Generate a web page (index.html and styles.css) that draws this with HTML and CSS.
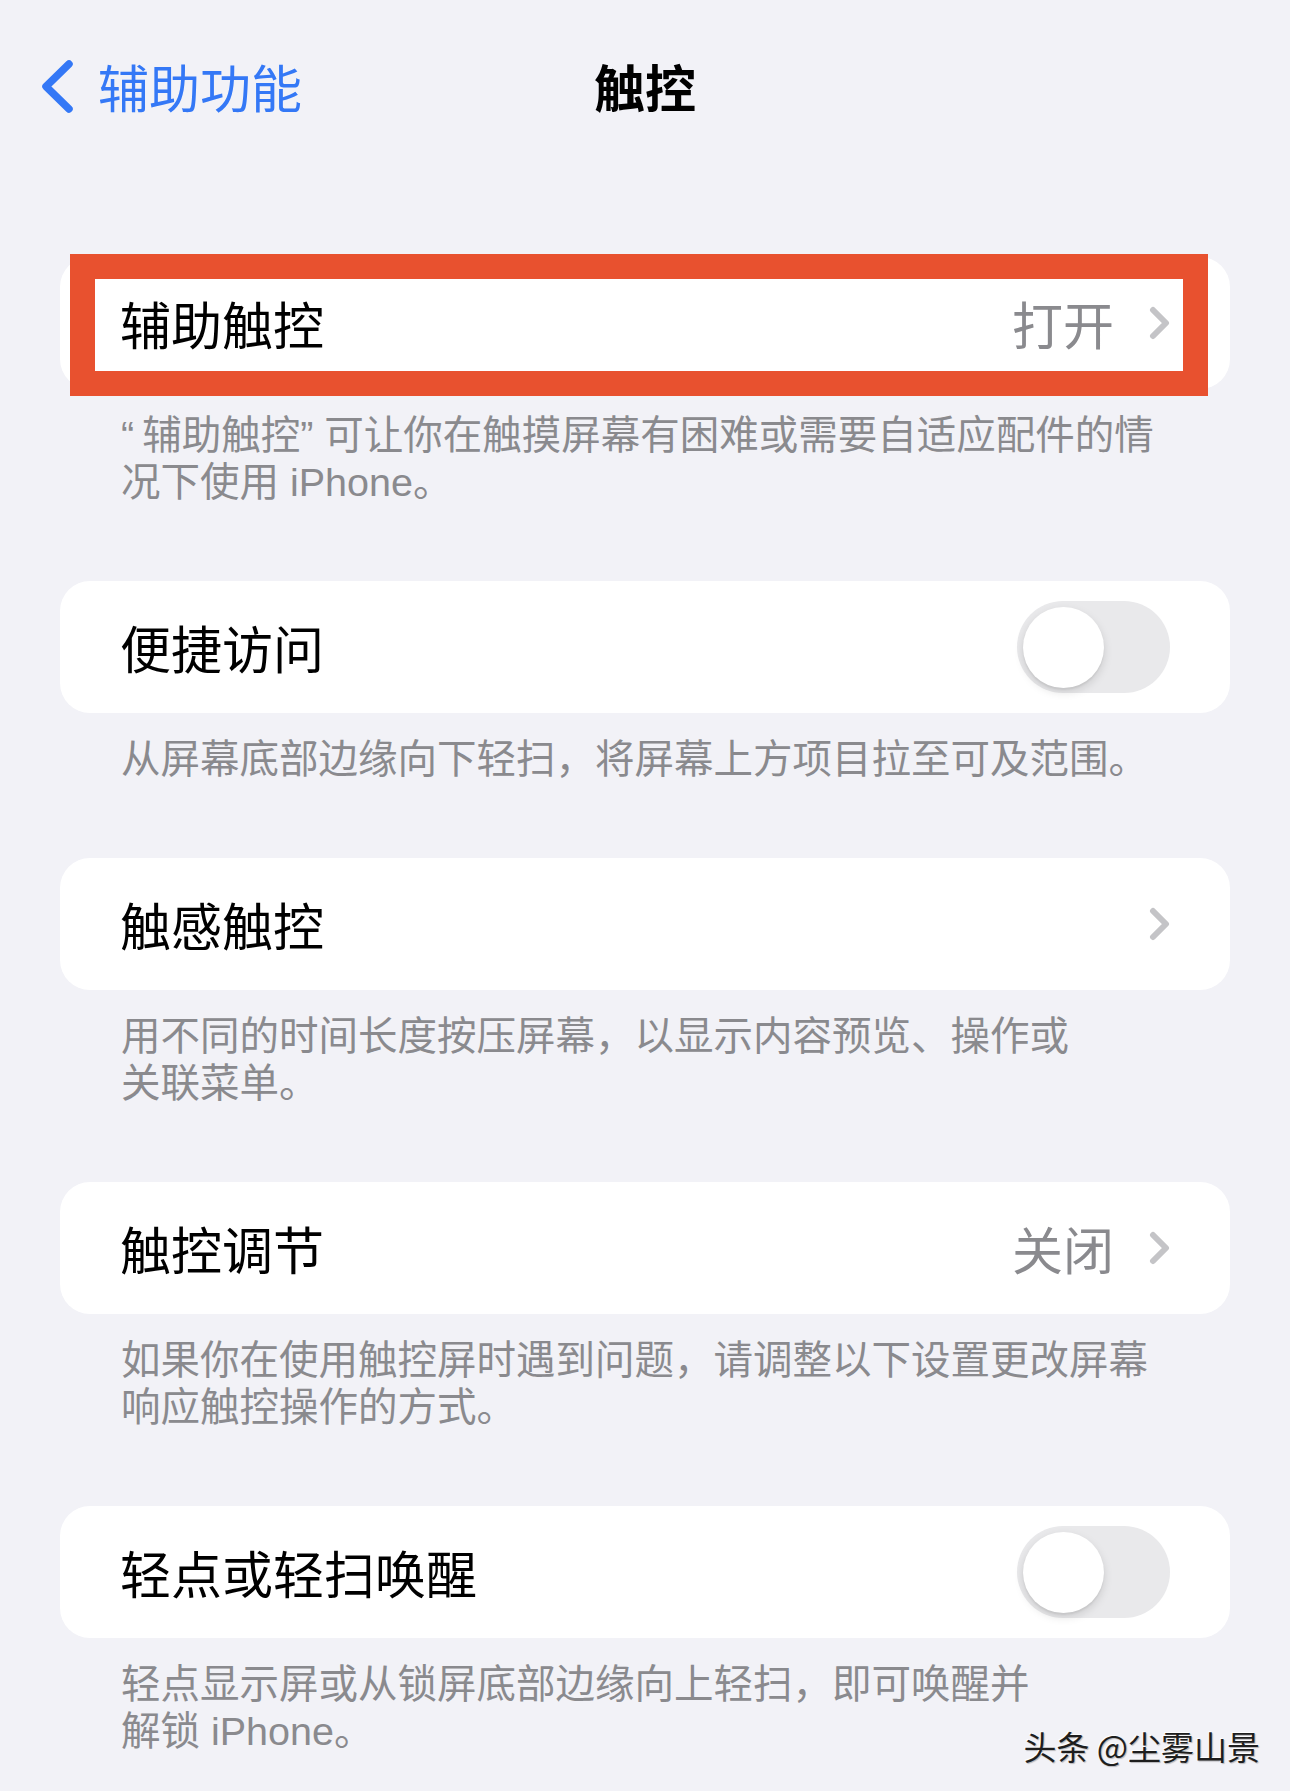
FILE: index.html
```html
<!DOCTYPE html>
<html lang="zh-CN">
<head>
  <meta charset="UTF-8">
  <title>触控</title>
  <link rel="stylesheet" href="styles.css">
</head>
<body>
  <header class="navbar">
    <a class="back" href="#">
      <svg class="back-icon" width="34" height="53" viewBox="0 0 34 53">
        <path d="M29 4 L6 26.5 L29 49" fill="none" stroke="#3478f6" stroke-width="7.5" stroke-linecap="round" stroke-linejoin="round"/>
      </svg>
      <span>辅助功能</span>
    </a>
    <h1 class="title">触控</h1>
    <div></div>
  </header>

  <main class="content">
    <section class="group">
      <div class="card">
        <span class="label">辅助触控</span>
        <span class="value">打开</span>
        <svg class="chevron" width="21" height="34" viewBox="0 0 21 34">
          <path d="M4 4 L17 17 L4 30" fill="none" stroke="#c4c4c7" stroke-width="6" stroke-linecap="round" stroke-linejoin="round"/>
        </svg>
        <div class="highlight"></div>
      </div>
      <p class="footer"><span class="q-open">“</span>辅助触控<span class="q-close">”</span>可让你在触摸屏幕有困难或需要自适应配件的情<br>况下使用 iPhone。</p>
    </section>

    <section class="group">
      <div class="card">
        <span class="label">便捷访问</span>
        <div class="switch"><div class="knob"></div></div>
      </div>
      <p class="footer">从屏幕底部边缘向下轻扫，将屏幕上方项目拉至可及范围。</p>
    </section>

    <section class="group">
      <div class="card">
        <span class="label">触感触控</span>
        <svg class="chevron" width="21" height="34" viewBox="0 0 21 34">
          <path d="M4 4 L17 17 L4 30" fill="none" stroke="#c4c4c7" stroke-width="6" stroke-linecap="round" stroke-linejoin="round"/>
        </svg>
      </div>
      <p class="footer">用不同的时间长度按压屏幕，以显示内容预览、操作或<br>关联菜单。</p>
    </section>

    <section class="group">
      <div class="card">
        <span class="label">触控调节</span>
        <span class="value">关闭</span>
        <svg class="chevron" width="21" height="34" viewBox="0 0 21 34">
          <path d="M4 4 L17 17 L4 30" fill="none" stroke="#c4c4c7" stroke-width="6" stroke-linecap="round" stroke-linejoin="round"/>
        </svg>
      </div>
      <p class="footer">如果你在使用触控屏时遇到问题，请调整以下设置更改屏幕<br>响应触控操作的方式。</p>
    </section>

    <section class="group">
      <div class="card">
        <span class="label">轻点或轻扫唤醒</span>
        <div class="switch"><div class="knob"></div></div>
      </div>
      <p class="footer">轻点显示屏或从锁屏底部边缘向上轻扫，即可唤醒并<br>解锁 iPhone。</p>
    </section>
  </main>

  <div class="watermark">头条 @尘雾山景</div>
</body>
</html>
```

FILE: styles.css
```css
body {
  margin: 0;
  background: #f2f2f7;
  font-family: "Noto Sans CJK SC", "Noto Sans", sans-serif;
  color: #000;
  min-height: 1791px;
  position: relative;
}

.navbar {
  height: 172px;
  display: grid;
  grid-template-columns: 1fr auto 1fr;
  align-items: center;
}
.back {
  display: flex;
  align-items: center;
  gap: 24px;
  padding-left: 40px;
  color: #3478f6;
  text-decoration: none;
  font-size: 51px;
  line-height: 60px;
}
.title {
  margin: 0;
  font-size: 51px;
  font-weight: 700;
  line-height: 60px;
}

.content {
  padding: 85px 60px 0;
}
.group {
  margin-bottom: 75px;
}
.card {
  position: relative;
  height: 132px;
  background: #fff;
  border-radius: 30px;
  display: flex;
  align-items: center;
  padding: 0 60px;
}
.label {
  flex: 1;
  font-size: 51px;
  line-height: 60px;
}
.value {
  font-size: 51px;
  line-height: 60px;
  color: #8a8a8e;
  margin-right: 35px;
}
.chevron {
  display: block;
}

.switch {
  width: 153px;
  height: 92px;
  border-radius: 46px;
  background: #e9e9eb;
  display: flex;
  align-items: center;
  padding: 0 6px;
  box-sizing: border-box;
}
.knob {
  width: 81px;
  height: 81px;
  border-radius: 50%;
  background: #fff;
  box-shadow: 0 4px 10px rgba(0,0,0,0.13), 0 2px 2px rgba(0,0,0,0.06);
}

.footer {
  margin: 0;
  padding: 23px 0 0 61px;
  font-family: "Liberation Sans", "Noto Sans CJK SC", sans-serif;
  font-size: 39.5px;
  line-height: 47px;
  color: #8a8a8e;
  white-space: nowrap;
}
.q-open {
  padding-right: 8px;
}
.q-close {
  padding-right: 11px;
}

/* red marker drawn around the first row */
.highlight {
  position: absolute;
  left: 10px;
  top: -3px;
  width: 1138px;
  height: 142px;
  border: 25px solid #e8512f;
  box-sizing: border-box;
}

.watermark {
  position: absolute;
  right: 30px;
  top: 1724px;
  font-size: 33px;
  line-height: 44px;
  color: #1e1e1e;
  text-shadow: -1px -1px 0 rgba(255,255,255,0.9), 1px 1px 1px rgba(0,0,0,0.25);
}
```
